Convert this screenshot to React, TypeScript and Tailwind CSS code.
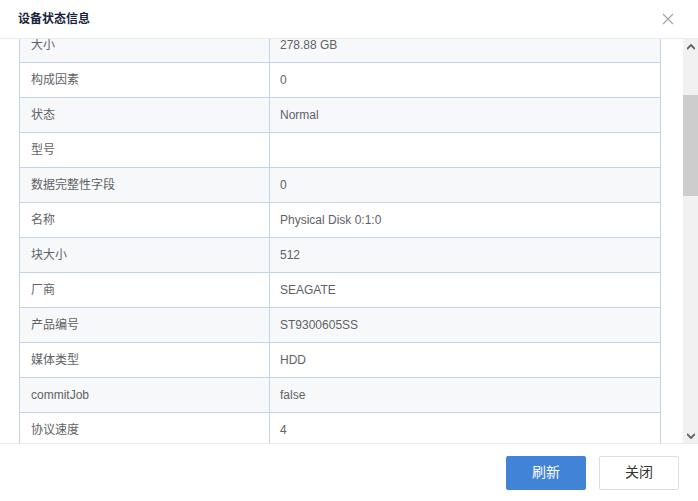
import React from 'react';

type Row = { label: string; value: string };

const rows: Row[] = [
  { label: '大小', value: '278.88 GB' },
  { label: '构成因素', value: '0' },
  { label: '状态', value: 'Normal' },
  { label: '型号', value: '' },
  { label: '数据完整性字段', value: '0' },
  { label: '名称', value: 'Physical Disk 0:1:0' },
  { label: '块大小', value: '512' },
  { label: '厂商', value: 'SEAGATE' },
  { label: '产品编号', value: 'ST9300605SS' },
  { label: '媒体类型', value: 'HDD' },
  { label: 'commitJob', value: 'false' },
  { label: '协议速度', value: '4' },
];

const font = { fontFamily: '"Liberation Sans", "Noto Sans CJK SC", sans-serif' };

export default function App() {
  return (
    <div className="flex h-[501px] w-[698px] flex-col overflow-hidden bg-white text-[#606266]" style={font}>
      {/* header */}
      <div className="flex h-[39px] flex-shrink-0 items-center justify-between border-b border-[#e8eaec] pl-[18px] pr-[24px]">
        <div className="text-[12px] font-bold text-[#17233d]">设备状态信息</div>
        <svg width="12" height="12" viewBox="0 0 12 12" className="text-[#a0a4ab]">
          <path d="M1 1 L11 11 M11 1 L1 11" stroke="currentColor" strokeWidth="1.2" fill="none" />
        </svg>
      </div>

      {/* body */}
      <div className="flex h-[404px] flex-shrink-0">
        <div className="flex-1 overflow-hidden pl-[19px] pr-[22px]">
          <table className="-mt-[12px] w-full border-collapse text-[12px]">
            <colgroup>
              <col className="w-[250px]" />
              <col />
            </colgroup>
            <tbody>
              {rows.map((r, i) => (
                <tr key={r.label} className={i % 2 === 0 ? 'bg-[#f7f8fa]' : 'bg-white'}>
                  <td className="h-[35px] border border-[#c3d3ee] px-[11px]">{r.label}</td>
                  <td className="h-[35px] border border-[#c3d3ee] px-[10px]">{r.value}</td>
                </tr>
              ))}
            </tbody>
          </table>
        </div>

        {/* scrollbar */}
        <div className="flex w-[15px] flex-col bg-[#f1f1f1]">
          <div className="flex h-[15px] items-center justify-center">
            <svg width="8" height="6" viewBox="0 0 8 6">
              <path d="M0 5 L4 1 L8 5" stroke="#606060" strokeWidth="1.8" fill="none" />
            </svg>
          </div>
          <div className="h-[41px]" />
          <div className="h-[101px] bg-[#cdcdcd]" />
          <div className="flex-1" />
          <div className="flex h-[15px] items-center justify-center">
            <svg width="8" height="6" viewBox="0 0 8 6">
              <path d="M0 1 L4 5 L8 1" stroke="#606060" strokeWidth="1.8" fill="none" />
            </svg>
          </div>
        </div>
      </div>

      {/* footer */}
      <div className="flex flex-1 items-center justify-end gap-[13px] border-t border-[#e8eaec] pr-[19px]">
        <button className="h-[34px] w-[80px] rounded-[2px] bg-[#4183d7] text-[14px] text-white">刷新</button>
        <button className="h-[34px] w-[80px] rounded-[2px] border border-[#dcdee2] bg-white text-[14px] text-[#333]">
          关闭
        </button>
      </div>
    </div>
  );
}
